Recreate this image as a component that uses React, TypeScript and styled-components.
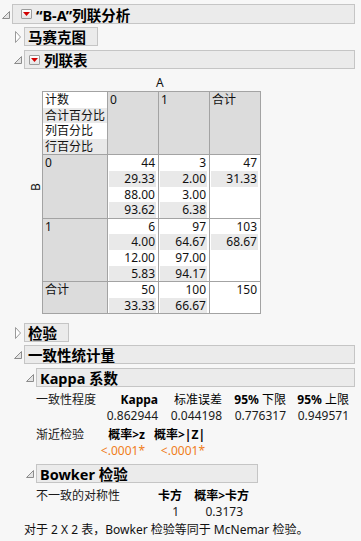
import React from 'react';
import styled, {createGlobalStyle} from 'styled-components';

const GlobalStyle = createGlobalStyle`
    html, body {
        margin: 0;
        padding: 0;
        background: #f7f7f7;
    }
    body {
        font-family: "Noto Sans", "Noto Sans CJK SC", sans-serif;
        font-size: 12px;
        color: #111;
    }
`;

const OpenIcon = () => (
    <svg width="8" height="8" viewBox="0 0 8 8">
        <polygon points="7.5,0.5 7.5,7.5 0.5,7.5" fill="#e4e4e4" stroke="#8c8c8c"/>
    </svg>
);

const ClosedIcon = () => (
    <svg width="6" height="12" viewBox="0 0 6 12">
        <polygon points="0.5,0.5 5.5,6 0.5,11.5" fill="#fff" stroke="#9a9a9a"/>
    </svg>
);

const MenuButton = () => (
    <MenuBox>
        <svg width="7" height="4" viewBox="0 0 7 4">
            <polygon points="0,0 7,0 3.5,4" fill="#d20000"/>
        </svg>
    </MenuBox>
);

interface NodeProps {
    title: React.ReactNode;
    open?: boolean;
    menu?: boolean;
    top?: number;
    width?: number;
    height?: number;
    pad?: number;
    children?: React.ReactNode;
}

const OutlineNode: React.FC<NodeProps> = ({title, open = true, menu, top, width, height, pad, children}) => (
    <Node $top={top}>
        <NodeHead>
            <Toggle>{open ? <OpenIcon/> : <ClosedIcon/>}</Toggle>
            <TitleBox $width={width} $h={height} $pad={pad}>
                {menu && <MenuButton/>}
                <span>{title}</span>
            </TitleBox>
        </NodeHead>
        {open && children && <NodeBody>{children}</NodeBody>}
    </Node>
);

type Cell = { kind: 'rowhead', text: string } | { kind: 'data', values: string[] };

const rows: Cell[][] = [
    [{kind: 'rowhead', text: '0'}, {kind: 'data', values: ['44', '29.33', '88.00', '93.62']},
        {kind: 'data', values: ['3', '2.00', '3.00', '6.38']}, {kind: 'data', values: ['47', '31.33']}],
    [{kind: 'rowhead', text: '1'}, {kind: 'data', values: ['6', '4.00', '12.00', '5.83']},
        {kind: 'data', values: ['97', '64.67', '97.00', '94.17']}, {kind: 'data', values: ['103', '68.67']}],
    [{kind: 'rowhead', text: '合计'}, {kind: 'data', values: ['50', '33.33']},
        {kind: 'data', values: ['100', '66.67']}, {kind: 'data', values: ['150']}],
];

const statLabels = ['计数', '合计百分比', '列百分比', '行百分比'];

const App: React.FC = () => {
    return (
        <Page>
            <GlobalStyle/>
            <OutlineNode title="“B-A”列联分析" menu width={343} height={20} pad={8}>
                <OutlineNode title="马赛克图" open={false} top={3}/>
                <OutlineNode title="列联表" menu width={331} pad={4} top={4}>
                    <AxisA>A</AxisA>
                    <CrossRow>
                        <AxisB><span>B</span></AxisB>
                        <Crosstab>
                            <LabelCell>
                                {statLabels.map((l, i) => (
                                    <LabelLine key={l} $shade={i % 2 === 1}>{l}</LabelLine>
                                ))}
                            </LabelCell>
                            <HeadCell>0</HeadCell>
                            <HeadCell>1</HeadCell>
                            <HeadCell>合计</HeadCell>
                            {rows.map((row, r) => row.map((cell, c) => cell.kind === 'rowhead'
                                ? <HeadCell key={`${r}-${c}`}>{cell.text}</HeadCell>
                                : (
                                    <DataCell key={`${r}-${c}`}>
                                        {cell.values.map((v, i) => (
                                            <NumLine key={i} $shade={i % 2 === 1}>{v}</NumLine>
                                        ))}
                                    </DataCell>
                                )))}
                        </Crosstab>
                    </CrossRow>
                </OutlineNode>
                <OutlineNode title="检验" open={false} top={9}/>
                <OutlineNode title="一致性统计量" width={331} top={3}>
                    <OutlineNode title="Kappa 系数" width={319} top={4}>
                        <StatGrid $cols="64px 58px 64px 64px 63px" $top={4}>
                            <Label>一致性程度</Label>
                            <Head>Kappa</Head>
                            <Head $light>标准误差</Head>
                            <Head>95% <Thin>下限</Thin></Head>
                            <Head>95% <Thin>上限</Thin></Head>
                            <span/>
                            <Num>0.862944</Num>
                            <Num>0.044198</Num>
                            <Num>0.776317</Num>
                            <Num>0.949571</Num>
                        </StatGrid>
                        <StatGrid $cols="64px 45px 60px" $top={3}>
                            <Label>渐近检验</Label>
                            <Head>概率&gt;z</Head>
                            <Head>概率&gt;|Z|</Head>
                            <span/>
                            <Num $alert>&lt;.0001*</Num>
                            <Num $alert>&lt;.0001*</Num>
                        </StatGrid>
                    </OutlineNode>
                    <OutlineNode title="Bowker 检验" width={222} top={6}>
                        <StatGrid $cols="84px 62px 67px" $top={4}>
                            <Label>不一致的对称性</Label>
                            <Head>卡方</Head>
                            <Head>概率&gt;卡方</Head>
                            <span/>
                            <Num $pr={3}>1</Num>
                            <Num $pr={6}>0.3173</Num>
                        </StatGrid>
                    </OutlineNode>
                    <Footnote>对于 2 X 2 表，Bowker 检验等同于 McNemar 检验。</Footnote>
                </OutlineNode>
            </OutlineNode>
        </Page>
    );
};

const Page = styled.div`
    padding-top: 4px;
    min-height: 541px;
    box-sizing: border-box;
`;

const Node = styled.div<{ $top?: number }>`
    margin-top: ${p => p.$top ?? 0}px;
`;

const NodeHead = styled.div`
    display: flex;
    align-items: center;
`;

const Toggle = styled.div`
    width: 12px;
    flex: none;
    display: flex;
    justify-content: center;
    align-items: center;
    padding-top: 1px;
`;

const TitleBox = styled.div<{ $width?: number; $h?: number; $pad?: number }>`
    box-sizing: border-box;
    display: flex;
    align-items: center;
    gap: 3px;
    height: ${p => p.$h ?? 19}px;
    ${p => p.$width ? `width: ${p.$width}px;` : 'padding-right: 11px;'}
    padding-left: ${p => p.$pad ?? 3}px;
    background: #ebebeb;
    border: 1px solid #c5c5c5;
    font-size: 14.5px;
    font-weight: 700;
    color: #000;
    white-space: nowrap;
`;

const MenuBox = styled.span`
    box-sizing: border-box;
    width: 11px;
    height: 10px;
    flex: none;
    display: flex;
    align-items: center;
    justify-content: center;
    border: 1px solid #9c9c9c;
    border-radius: 1px;
    background: linear-gradient(#ffffff, #e4e4e4);
    margin-right: 1px;
`;

const NodeBody = styled.div`
    padding-left: 12px;
`;

const AxisA = styled.div`
    margin-top: 6px;
    height: 16px;
    line-height: 16px;
    padding-left: 132px;
`;

const CrossRow = styled.div`
    display: flex;
`;

const AxisB = styled.div`
    width: 18px;
    flex: none;
    span {
        display: block;
        width: 12px;
        height: 12px;
        line-height: 12px;
        text-align: center;
        margin: 90px 0 0 6px;
        transform: rotate(-90deg);
    }
`;

const Crosstab = styled.div`
    display: grid;
    grid-template-columns: 64px 50px 50px 50px;
    gap: 1px;
    padding: 1px;
    background: #a3a3a3;
    width: max-content;
`;

const HeadCell = styled.div`
    background: #dcdcdc;
    padding: 0 2px;
    line-height: 15.6px;
`;

const LabelCell = styled.div`
    background: #fff;
`;

const LabelLine = styled.div<{ $shade?: boolean }>`
    height: 15.6px;
    line-height: 15.6px;
    padding-left: 2px;
    white-space: nowrap;
    background: ${p => p.$shade ? '#e9e9e9' : 'transparent'};
`;

const DataCell = styled.div`
    background: #fff;
    padding: 0 2px 0 1px;
`;

const NumLine = styled.div<{ $shade?: boolean }>`
    height: 15.6px;
    line-height: 15.6px;
    text-align: right;
    padding-right: 1px;
    background: ${p => p.$shade ? '#e9e9e9' : 'transparent'};
`;

const StatGrid = styled.div<{ $cols: string; $top?: number }>`
    display: grid;
    grid-template-columns: ${p => p.$cols};
    grid-auto-rows: 16px;
    align-items: center;
    margin-top: ${p => p.$top ?? 0}px;
    white-space: nowrap;
`;

const Label = styled.div`
    color: #1a1a1a;
`;

const Head = styled.div<{ $light?: boolean }>`
    text-align: right;
    font-weight: ${p => p.$light ? 400 : 700};
    color: #000;
`;

const Thin = styled.span`
    font-weight: 400;
`;

const Num = styled.div<{ $alert?: boolean; $pr?: number }>`
    text-align: right;
    padding-right: ${p => p.$pr ?? 0}px;
    color: ${p => p.$alert ? '#f07d1a' : '#1a1a1a'};
`;

const Footnote = styled.div`
    margin-top: 3px;
    height: 16px;
    line-height: 16px;
    white-space: nowrap;
`;

export default App;
